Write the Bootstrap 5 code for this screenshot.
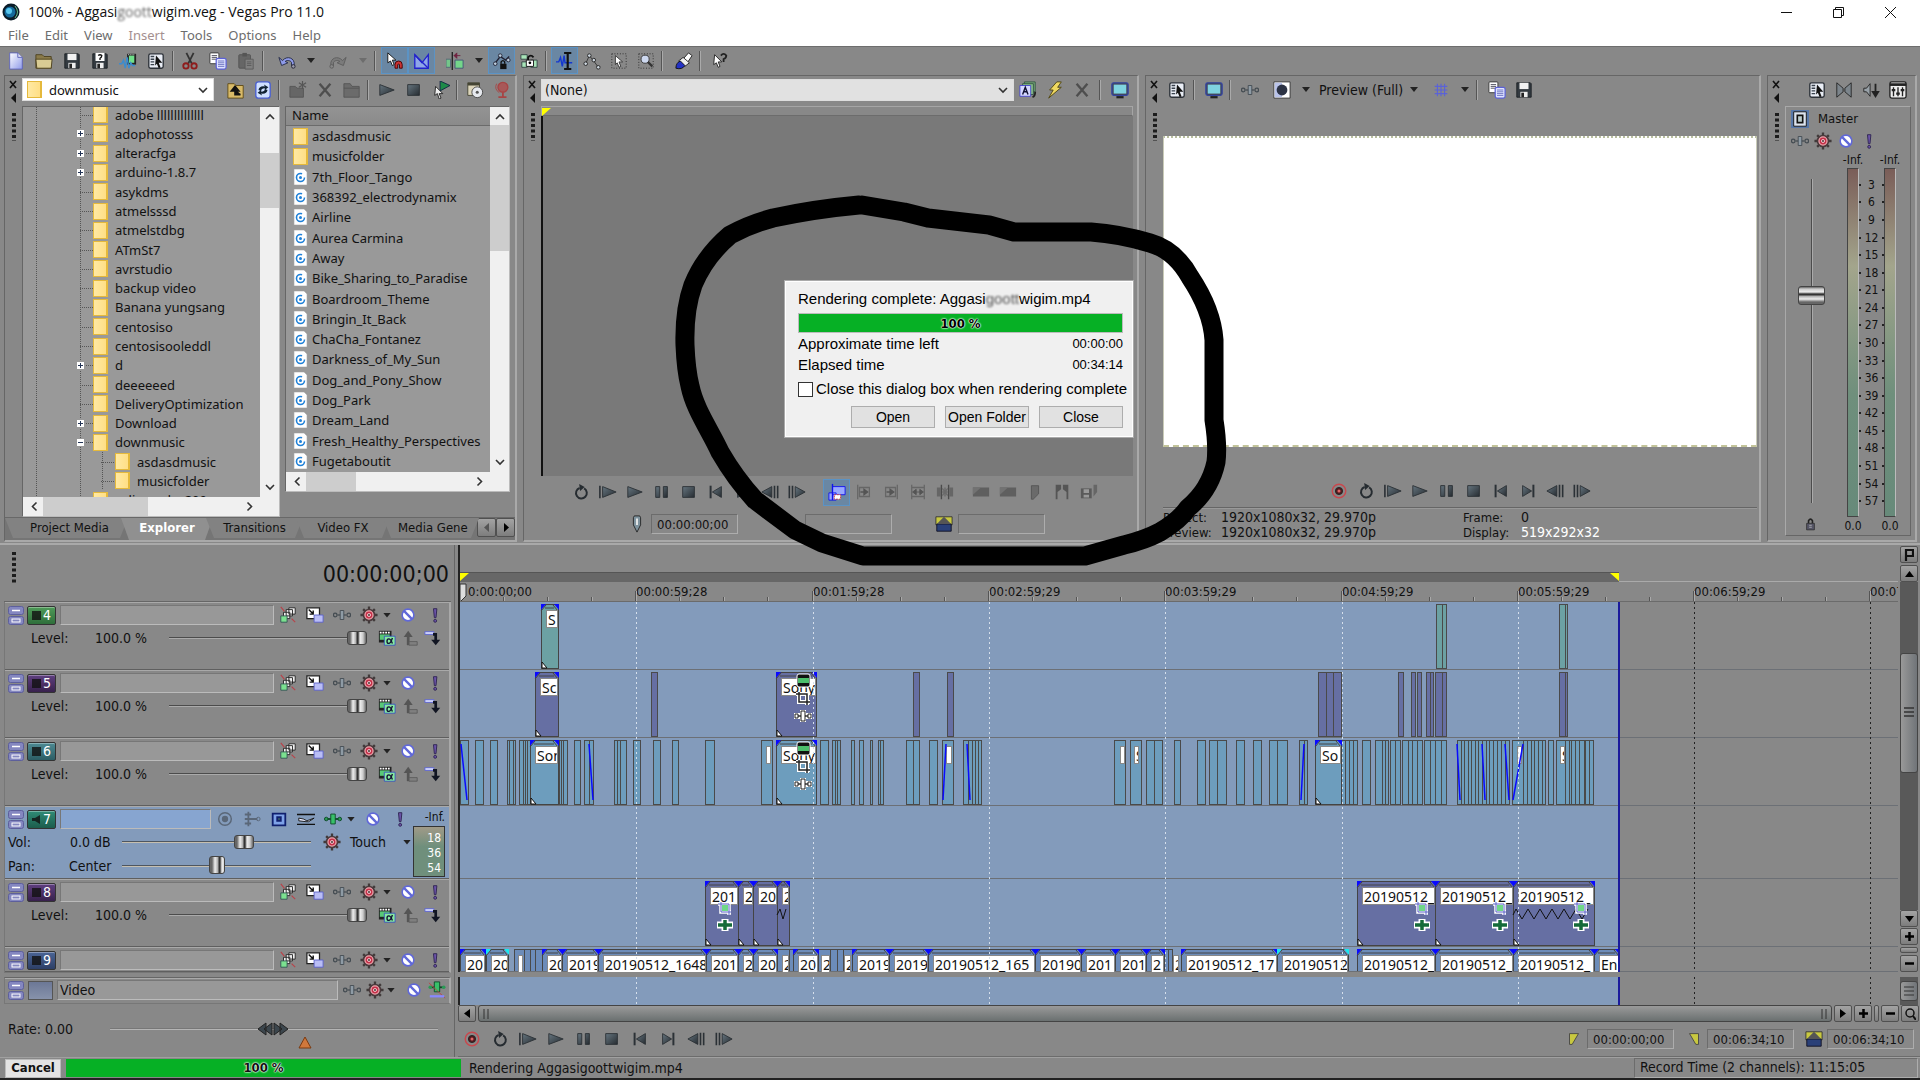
<!DOCTYPE html>
<html lang="en">
<head>
<meta charset="utf-8">
<meta name="viewport" content="width=device-width, initial-scale=1">
<title>Vegas Pro 11.0</title>
<link rel="stylesheet" href="https://cdn.jsdelivr.net/npm/bootstrap@5.3.0/dist/css/bootstrap.min.css">
<style>
:root{--face:#888;--dark:#666;--light:#a9a9a9;--ink:#111;--sel:#839bbb}
body{font-family:"DejaVu Sans Condensed","DejaVu Sans",sans-serif;font-stretch:condensed;font-size:13px;line-height:16px;color:var(--ink);background:var(--face);overflow:hidden}
.ui{font-family:"Noto Sans","Noto Sans CJK KR",sans-serif;font-stretch:normal}
.t14{font-size:14px}
button,input,select{font:inherit;color:inherit}
svg{display:block}
.titlebar{height:24px;background:#fff;padding-left:2px;font-family:"Open Sans","Noto Sans",sans-serif;font-stretch:normal;font-size:14px}
.smudge{filter:blur(1px);opacity:.65}
.winbtn{width:52px;height:24px;border:0;background:none;padding:0}
.menus{height:22px;background:#fff;padding-left:8px;gap:16px}
.menus a{color:#6d6d6d;text-decoration:none}
.menus a.off{color:#a48f8f}
.maintools{height:28px;border-top:1px solid #6d6d6d;padding-left:2px}
.ib{width:28px;height:27px;padding:0;border:0;background:none;display:flex;align-items:center;justify-content:center;flex:none}
.ib.on{background:#6a87a3;border:1px solid #5b93c5}
.ib svg{width:18px;height:18px}
.w27 .ib{width:27px}
.w22 .ib{width:23px}
.vsep{width:6px;height:20px;flex:none;display:flex;justify-content:center}
.vsep::before{content:"";width:2px;background:#555;border-right:1px solid #aaa}
.drop{width:8px;height:5px;flex:none;background:#222;clip-path:polygon(0 0,100% 0,50% 100%);margin:0 1px}
.drop.off{background:#6d6d6d}
.dock{flex:1 1 469px;min-height:0;padding:1px 3px 1px 4px;gap:6px}
.panel{border:1px solid var(--dark);border-right:2px solid var(--light);border-bottom:2px solid var(--light);min-width:0;position:relative}
.grip{width:17px;flex:none;padding:3px 0 0 3px}
.ptools{height:30px;padding-bottom:3px}
.combo{position:relative}
.combo select{appearance:none;width:100%;border:1px solid #ddd;background:#fff;height:23px;padding:0 20px 0 26px;border-radius:0;display:block}
.combo.grey select{background:#e1e1e1;padding-left:3px;height:22px;font-size:14px}
.combo svg{position:absolute;pointer-events:none}
.listbox{background:#999;border:1px solid #bbb;border-top-color:#666;border-left-color:#666;min-height:0}
.listbox ul{list-style:none;margin:0;padding:0;display:flex;flex-direction:column}
.listbox li{flex:1 1 0;display:flex;align-items:center;white-space:nowrap;min-height:0}
.tree ul{height:405px;margin-top:-2px;position:relative}
.tree li{padding-left:46px;position:relative}
.tree li.kid{padding-left:68px}
.tree li::before{content:"";position:absolute;left:57px;width:13px;top:50%;border-top:1px dotted #555}
.tree li.kid::before{left:78px}
.tree li span{position:relative}
.tree .fold{margin-left:24px;margin-right:7px}
.twig{position:absolute;width:9px;height:9px;left:53px;background:#fff;border:1px solid #999;z-index:1}
.twig::before{content:"";position:absolute;left:1px;top:3px;width:5px;height:1px;background:#235}
.twig.plus::after{content:"";position:absolute;left:3px;top:1px;width:1px;height:5px;background:#235}
.vline{position:absolute;top:0;bottom:0;border-left:1px dotted #555}
.fold{width:15px;height:17px;flex:none;background:linear-gradient(90deg,#ffe9a3,#ffdf86);border:1px solid #e5b93c;border-right-width:2px;display:inline-block}
.sb{background:#f0f0f0;flex:none;display:flex;align-items:center}
.sb.v{width:19px;flex-direction:column;justify-content:space-between;padding:6px 0}
.sb.h{height:19px;justify-content:space-between;padding:0 6px}
.sb{position:relative}
.sb i{position:absolute;background:#cdcdcd}
.heading{height:19px;border-bottom:1px solid #6b6b6b;background:linear-gradient(#939393,#8a8a8a);padding-left:6px}
.files ul{height:345px}
.files li{padding-left:7px;gap:4px}
.tabs{height:23px;background:#757575;border-top:1px solid #686868}
.tabs a{color:#111;text-decoration:none;height:20px;line-height:20px;background:#828282;clip-path:polygon(0 0,100% 0,calc(100% - 8px) 100%,8px 100%);text-align:center;white-space:nowrap;overflow:hidden;flex:none;margin-right:-7px}
.tabs a.cur{background:#909090;color:#fff;font-weight:700;height:22px}
.sqb{border:1px solid #505050;background:linear-gradient(#a3a3a3,#7d7d7d);padding:0;border-radius:2px;display:flex;align-items:center;justify-content:center;flex:none}
.strip{height:10px;border:1px solid #a5a5a5;border-bottom-color:#6c6c6c;position:relative}
.tri{position:absolute;width:9px;height:8px;background:#ff0;clip-path:polygon(0 0,100% 0,0 100%)}
.tri.r{clip-path:polygon(0 0,100% 0,100% 100%)}
.viewer{background:#797979;border-left:2px solid #111}
.field{border:1px solid #6c6c6c;border-right-color:#adadad;border-bottom-color:#adadad;background:none;height:20px;padding:0 5px;border-radius:0}
.movie{background:#fff;height:311px;border:1px solid #c9cbb8;border-top:2px dotted #b9bfa0;border-bottom:2px dashed #c3c49a}
.info{border-top:1px solid #666;box-shadow:inset 0 1px #999;padding-top:2px;display:grid;grid-template-columns:58px 242px 58px 1fr;line-height:15px}
.masterbox{border:1px solid var(--light);border-right-color:var(--dark);border-bottom-color:var(--dark)}
.meters{display:grid;grid-template-columns:61px 12px 25px 12px 1fr;grid-template-rows:17px 1fr 18px}
.meters>span{display:flex;justify-content:center;white-space:nowrap;align-items:center;font-size:12px}
.bar{border:1px solid #444;border-right-color:#bbb;background:linear-gradient(#7a5d58 0,#a3a58c 28%,#6f8f7c 65%,#678a7a)}
.ticks{display:flex;flex-direction:column;padding:8px 0 7px}
.ticks span{flex:1;display:flex;align-items:center;justify-content:space-between;font-size:12px}
.ticks span::before,.ticks span::after{content:"";width:2px;height:2px;background:#222}
input[type=range]{appearance:none;-webkit-appearance:none;background:none;height:18px;margin:0;padding:0;min-width:0}
input[type=range]::-webkit-slider-runnable-track{height:2px;background:#4c4c4c;border-bottom:1px solid #aaa}
input[type=range]::-webkit-slider-thumb{-webkit-appearance:none;width:20px;height:14px;margin-top:-6px;border:1px solid #444;border-radius:3px;background:linear-gradient(90deg,#666 0 2px,#eee 5px,#aaa 8px,#333 9px 10px,#eee 12px,#ccc 15px,#666)}
input.pan::-webkit-slider-thumb{width:16px;height:18px;margin-top:-9px}
input.blue::-webkit-slider-runnable-track{background:#4e5660;border-color:#c5bfb0}
.faderbox{position:relative;grid-row:1/4}
.faderbox input{position:absolute;width:324px;left:-136px;top:181px;transform:rotate(-90deg)}
.faderbox input::-webkit-slider-thumb{height:27px;width:19px;margin-top:-13px}
.faderbox svg{position:absolute;left:18px;bottom:4px}
.session{border-top:2px solid var(--light);flex:none}
.leftcol{width:455px;flex:none;padding-left:4px;border-right:1px solid #666}
.clock{height:57px;font-size:23px;line-height:59px;text-align:right;padding-right:2px;border-bottom:1px solid #666;margin-right:3px;position:relative}
.clock svg{position:absolute;left:4px;top:7px}
.tracks{border:1px solid #777;border-top:0;border-right:2px solid var(--light);margin-right:3px}
.trk{height:68px;border-top:1px solid var(--light);border-bottom:1px solid #5f5f5f;padding:2px 1px 0 3px;font-size:14px;overflow:hidden}
.trk.audio{height:73px;background:var(--sel)}
.trk.cut{height:25px}
.trk .ib{height:20px}
.num{width:29px;height:19px;flex:none;border:1px solid #333;border-radius:2px;color:#fff;padding:0 4px;box-shadow:inset 0 1px #ffffff55;display:flex;align-items:center;justify-content:space-between;font-size:14px;font-family:"DejaVu Sans",sans-serif}
.nm{flex:1;min-width:0;height:20px;background:#989898;border:1px solid #777;border-right-color:#bbb;border-bottom-color:#bbb;padding:0 2px;border-radius:0}
.audio .nm{background:#87a5d0}
.vu{width:35px;flex:none;padding-right:3px;line-height:17px;font-size:12px;text-align:right;white-space:nowrap}
.vu>div{border:1px solid #333;height:51px;background:linear-gradient(#a09a88,#6f8f7c 40%);line-height:15px;padding:4px 3px 0 0;overflow:hidden;color:#fff}
.lane-area{flex:1;min-width:0;border-left:2px solid #222;position:relative}
.loopbar{height:10px;margin-top:27px;border-bottom:1px solid #aaa;position:relative}
.loopbar>div{width:1159px;height:10px;background:#676767;position:relative;border-top:1px solid #555}
.ruler{height:20px;position:relative;overflow:hidden;border-bottom:1px solid #6b6b6b}
.ruler span{position:absolute;top:3px;line-height:14px}
.ruler i{position:absolute;bottom:0;width:2px;height:4px;background:#555;border-right:1px solid #aaa}
.ruler i.big{height:10px}
.lanes{background:linear-gradient(90deg,var(--sel) 0 1159px,#888 0);position:relative;overflow:hidden}
.lane{height:68px;border-bottom:1px solid #6c7076;position:relative}
.lane svg{position:absolute;left:0;top:0;width:100%;height:100%}
.lane span{position:absolute;top:8px;height:18px;background:#fff;border:1px solid #888;overflow:hidden;white-space:nowrap;line-height:17px;padding-left:1px;font-size:14px}
.gl{position:absolute;top:0;bottom:0;width:1px;background:repeating-linear-gradient(#d5dfeb 0 2px,transparent 2px 5px)}
.gl.k{background:repeating-linear-gradient(#222 0 2px,transparent 2px 5px)}
.endline{position:absolute;top:0;bottom:0;width:2px;background:#1a1a9c;left:1158px}
.rail{width:22px;flex:none;padding:0 1px 0 2px}
.rail .sqb{width:18px;height:17px}
.groove{background:#595959;width:18px;position:relative}
.knob{background:linear-gradient(90deg,#999,#707478);border:1px solid #444;border-radius:3px;display:flex;align-items:center;justify-content:center}
.hbar{height:17px;border:1px solid #444;background:linear-gradient(#9a9a9a,#6a7070);border-radius:3px;padding:0 4px}
.transport{height:35px;border-bottom:1px solid #6c6c6c}
.status{height:23px;border-top:1px solid #a0a0a0;border-bottom:2px solid #222;font-size:14px}
.cancel{width:56px;height:19px;border:1px solid #bbb;background:#e3e3e3;font-weight:700;padding:0;line-height:16px;font-size:13px;border-radius:0}
.prog{background:#06b025;text-align:center;font-weight:700;font-family:"DejaVu Sans",sans-serif;font-size:13px;text-shadow:0 0 2px #fff,0 0 2px #fff,0 0 1px #fff}
.dlg{position:absolute;left:785px;top:281px;width:348px;background:#f0f0f0;border:1px solid #fff;outline:1px solid #aaa;padding:8px 9px 8px 12px;font-family:"Liberation Sans",Arial,sans-serif;font-size:15px;line-height:18px;color:#000}
.dlg .prog{height:20px;border:1px solid #bcbcbc;line-height:19px}
.dlg button{width:84px;height:22px;border:1px solid #adadad;background:#e1e1e1;padding:0;line-height:18px;font-size:14px}
.dlg input{width:15px;height:15px;flex:none;appearance:none;border:1px solid #333;background:#fff;margin:0}
.dlg .tm{font-size:13px}
.scribble{position:absolute;left:0;top:0;pointer-events:none}
</style>
<script src="https://cdn.jsdelivr.net/npm/bootstrap@5.3.0/dist/js/bootstrap.bundle.min.js"></script>
</head>
<body class="min-vh-100 d-flex flex-column position-relative">
<svg width="0" height="0" class="position-absolute" aria-hidden="true">
<defs>
<linearGradient id="gm" x1="0" y1="0" x2="1" y2="1"><stop offset="0" stop-color="#66757f"/><stop offset="1" stop-color="#262c31"/></linearGradient>
<linearGradient id="gp" x1="0" y1="0" x2="1" y2="1"><stop offset="0" stop-color="#fff"/><stop offset="1" stop-color="#8f9bea"/></linearGradient>
</defs>
<symbol id="new" viewBox="0 0 20 20"><path d="M3 1h9l5 5v13H3z" fill="url(#gp)" stroke="#5b62b8"/><path d="M12 1v5h5" fill="#dde" stroke="#5b62b8"/></symbol>
<symbol id="open" viewBox="0 0 20 20"><path d="M1 3h7l2 2h8v13H1z" fill="#8a7a4a" stroke="#4c411f"/><path d="M1 8h18l-1 10H2z" fill="#d9cc94" stroke="#4c411f"/></symbol>
<symbol id="save" viewBox="0 0 20 20"><path d="M2 2h15l1 1v15H2z" fill="#333a40" stroke="#1c2024"/><path d="M5 2h10v7H5z" fill="#f2f2f2"/><path d="M6 12h8v6H6z" fill="#eee"/><path d="M7 13h3v5H7z" fill="#222"/></symbol>
<symbol id="saveas" viewBox="0 0 20 20"><path d="M2 2h15l1 1v15H2z" fill="#333a40" stroke="#1c2024"/><path d="M5 1h10v9H5z" fill="#fff"/><path d="M8 4q2-2 4 0 0 2-2 3v2" stroke="#111" fill="none" stroke-width="1.5"/><path d="M6 12h8v6H6z" fill="#eee"/><path d="M7 13h3v5H7z" fill="#222"/></symbol>
<symbol id="render" viewBox="0 0 20 20"><path d="M9 2h10v12H9z" fill="#222"/><path d="M11 4h6v8h-6z" fill="#6fe08a"/><path d="M10 3h8" stroke="#ddd" stroke-dasharray="1 1"/><path d="M0 13h3l2-4 2 9 2-12 2 12 2-6 2 3 3 0" fill="none" stroke="#3a8cd0" stroke-width="1.6"/></symbol>
<symbol id="props" viewBox="0 0 20 20"><rect x="2" y="2" width="16" height="16" rx="2" fill="#e9edf5" stroke="#2c3138" stroke-width="1.5"/><path d="M4 5h4M4 8h4M4 11h4M4 14h4" stroke="#39424d" stroke-width="1.6"/><path d="M10 4l7 8h-4l2 5-2 1-2-5-2 2z" fill="#111"/></symbol>
<symbol id="cut" viewBox="0 0 20 20"><path d="M6 1l6 12M14 1L8 13" stroke="#333" stroke-width="2" fill="none"/><circle cx="5.500" cy="15.500" r="3" fill="none" stroke="#8e1c1c" stroke-width="2"/><circle cx="14.500" cy="15.500" r="3" fill="none" stroke="#8e1c1c" stroke-width="2"/></symbol>
<symbol id="copy" viewBox="0 0 20 20"><rect x="1" y="1" width="10" height="12" rx="1" fill="#fff" stroke="#333"/><path d="M3 4h6M3 6h6M3 8h6" stroke="#445"/><rect x="8" y="7" width="11" height="12" rx="2" fill="#dfe3ff" stroke="#5c62d6" stroke-width="1.400"/><path d="M10 10h7M10 12h7M10 14h7M10 16h7" stroke="#6a70c0"/></symbol>
<symbol id="paste" viewBox="0 0 20 20"><rect x="2" y="3" width="13" height="15" rx="1" fill="#666" stroke="#555"/><path d="M6 1h5v4H6z" fill="#555"/><path d="M9 8h9v11H9z" fill="#808080" stroke="#5a5a5a"/><path d="M11 11h5M11 13h5M11 15h5" stroke="#5a5a5a"/></symbol>
<symbol id="undo" viewBox="0 0 20 20"><path d="M1 6l3 9 7-3-3-1.500c2-2 6-1 7 1v4l3-1c1-8-8-11-13-5z" fill="#8f9bea" stroke="#222844"/><circle cx="17" cy="16" r="2" fill="#99a" stroke="#223"/></symbol>
<symbol id="redo" viewBox="0 0 20 20"><path d="M19 6l-3 9-7-3 3-1.500c-2-2-6-1-7 1v4l-3-1c-1-8 8-11 13-5z" fill="#7b7b7b" stroke="#5c5c5c"/><circle cx="3" cy="16" r="2" fill="#888" stroke="#5c5c5c"/></symbol>
<symbol id="snap" viewBox="0 0 20 20"><path d="M2 1l9 8H7l2 5-2 1-2-5-3 2z" fill="#fff" stroke="#111"/><path d="M10 18v-4a4 4 0 0 1 8 0v4h-3v-4q-1-1-2 0v4z" fill="#c33" stroke="#400"/></symbol>
<symbol id="xfade" viewBox="0 0 20 20"><path d="M2 3v15h15V3L10 12z" fill="#8fa6e8" stroke="#22c" stroke-width="1.500"/><path d="M2 3l15 15" stroke="#22c" stroke-width="1.500"/></symbol>
<symbol id="ripple" viewBox="0 0 20 20"><path d="M0 8h5v9H0z" fill="#74c68a" stroke="#567"/><path d="M7 0v20" stroke="#222" stroke-width="1.500"/><path d="M9 4h7M9 4l3-3v6z" stroke="#702040" fill="#702040"/><path d="M10 9h9v9h-9z" fill="#74d68a" stroke="#457"/></symbol>
<symbol id="lockenv" viewBox="0 0 20 20"><path d="M2 13L8 5l6 4 4-4" stroke="#223" fill="none" stroke-width="1.500"/><g fill="#bcd" stroke="#223"><circle cx="2.500" cy="13" r="2"/><circle cx="8" cy="4" r="2"/><circle cx="17" cy="9" r="2"/></g><path d="M8 13h7v6H8z" fill="#111"/><path d="M9 13v-2q2-3 4 0v2" stroke="#111" fill="none" stroke-width="1.500"/></symbol>
<symbol id="group" viewBox="0 0 20 20"><path d="M1 3h7v5H1zM12 9h7v8h-7zM2 11h6v6H2z" fill="#a8e4b8" stroke="#344"/><path d="M7 9h8v7H7z" fill="#fff" stroke="#111"/><path d="M9 9V6q3-4 6 0" stroke="#111" fill="none" stroke-width="2"/><circle cx="11" cy="12" r="1.500"/></symbol>
<symbol id="edit" viewBox="0 0 20 20"><path d="M0 11h3l2-5 2 10 2-12 1 8h8" fill="none" stroke="#1438d0" stroke-width="1.600"/><path d="M9 1h8M9 19h8M13 1v18" stroke="#111" stroke-width="2.400"/></symbol>
<symbol id="env" viewBox="0 0 20 20"><path d="M3 13L7 4l5 6 5 7" stroke="#333" fill="none"/><g fill="#cdd6df" stroke="#222"><circle cx="3" cy="13" r="2"/><circle cx="7" cy="4" r="2"/><circle cx="12" cy="9" r="2"/><circle cx="17" cy="17" r="2"/></g></symbol>
<symbol id="select" viewBox="0 0 20 20"><rect x="2" y="2" width="16" height="16" fill="none" stroke="#222" stroke-dasharray="1 2"/><path d="M6 4l8 7h-4l2 5-2 1-2-5-2 2z" fill="#fff" stroke="#333"/></symbol>
<symbol id="zoomt" viewBox="0 0 20 20"><rect x="2" y="2" width="16" height="16" fill="none" stroke="#222" stroke-dasharray="1 2"/><circle cx="9" cy="8" r="4.500" fill="#cdd8ef" stroke="#333"/><path d="M12 11l5 5" stroke="#333" stroke-width="2.500"/></symbol>
<symbol id="brush" viewBox="0 0 20 20"><path d="M8 9l7-8 4 3-6 9z" fill="#fff" stroke="#222"/><path d="M4 10l5-4 7 6-5 4z" fill="#eee" stroke="#222"/><path d="M1 18q0-6 5-8l5 5q-3 5-10 3z" fill="#2331c4" stroke="#111"/></symbol>
<symbol id="help" viewBox="0 0 20 20"><path d="M4 3l8 8H8l2 5-2 1-2-5-3 2z" fill="#fff" stroke="#222"/><path d="M11 4q3-4 6 0 0 3-3 4v3" stroke="#222" fill="none" stroke-width="2"/></symbol>
<symbol id="up" viewBox="0 0 20 20"><path d="M1 3h7l2 2h8v14H1z" fill="#d8ba68" stroke="#5e4a15"/><path d="M15 15H9V8M9 6l-4 5h8z" stroke="#111" fill="#111" stroke-width="2"/></symbol>
<symbol id="refresh" viewBox="0 0 20 20"><rect x="2" y="1" width="16" height="18" rx="3" fill="#cfe0ff" stroke="#4a5fd0" stroke-width="1.500"/><path d="M5 10q1-5 7-4l-1-2 5 3-4 3v-2q-4 0-4 3zM15 10q-1 5-7 4l1 2-5-3 4-3v2q4 0 4-3z" fill="#123"/></symbol>
<symbol id="newf" viewBox="0 0 20 20"><path d="M1 6h6l2 2h7v10H1z" fill="#666" stroke="#555"/><path d="M15 0v9M11 2l8 5M19 2l-8 5" stroke="#555" stroke-width="1.300"/></symbol>
<symbol id="delx" viewBox="0 0 20 20"><path d="M4 3l12 14M16 3L4 17" stroke="#4e4e4e" stroke-width="2.600"/></symbol>
<symbol id="gfold" viewBox="0 0 20 20"><path d="M1 3h7l2 3h8v12H1z" fill="#6b6b6b" stroke="#555"/><path d="M1 8h17" stroke="#555"/></symbol>
<symbol id="play" viewBox="0 0 20 20"><path d="M2 4l16 6-16 6z" fill="url(#gm)" stroke="#2b3136"/></symbol>
<symbol id="stop" viewBox="0 0 20 20"><path d="M3 4h13v12H3z" fill="url(#gm)" stroke="#2b3136"/></symbol>
<symbol id="pause" viewBox="0 0 20 20"><path d="M3 4h4.500v12H3zM11.500 4H16v12h-4.500z" fill="url(#gm)" stroke="#2b3136"/></symbol>
<symbol id="playst" viewBox="0 0 20 20"><path d="M1 3v14" stroke="#2b3136" stroke-width="1.800"/><path d="M4 4l15 6-15 6z" fill="url(#gm)" stroke="#2b3136"/></symbol>
<symbol id="prev" viewBox="0 0 20 20"><path d="M4 3v14" stroke="#2b3136" stroke-width="2.200"/><path d="M16 4v12l-10-6z" fill="url(#gm)" stroke="#2b3136"/></symbol>
<symbol id="next" viewBox="0 0 20 20"><path d="M16 3v14" stroke="#2b3136" stroke-width="2.200"/><path d="M4 4v12l10-6z" fill="url(#gm)" stroke="#2b3136"/></symbol>
<symbol id="sback" viewBox="0 0 20 20"><path d="M15 3v14M18.500 3v14" stroke="#2b3136" stroke-width="1.800"/><path d="M12 4v12L1 10z" fill="url(#gm)" stroke="#2b3136"/></symbol>
<symbol id="sfwd" viewBox="0 0 20 20"><path d="M5 3v14M1.500 3v14" stroke="#2b3136" stroke-width="1.800"/><path d="M8 4v12l11-6z" fill="url(#gm)" stroke="#2b3136"/></symbol>
<symbol id="loop" viewBox="0 0 20 20"><path d="M13.500 6a6 6 0 1 1-5-0.500" stroke="#262c31" stroke-width="2.200" fill="none"/><path d="M8 1l6 3.500-5 4.500z" fill="#262c31"/></symbol>
<symbol id="rec" viewBox="0 0 20 20"><circle cx="10" cy="10" r="7.500" fill="none" stroke="#c8484e" stroke-width="1.600"/><circle cx="10" cy="10" r="4" fill="#541a1e" stroke="#222"/><circle cx="10" cy="10" r="1.700" fill="#d66"/></symbol>
<symbol id="autop" viewBox="0 0 20 20"><path d="M9 0l11 5-11 6z" fill="#1d8a48" stroke="#124"/><path d="M4 6l8 8H8l2 5-2 1-2-6-3 2z" fill="#eee" stroke="#222"/></symbol>
<symbol id="disc" viewBox="0 0 20 20"><path d="M2 2h13v14H2z" fill="#ddd6bb" stroke="#443"/><path d="M2 2h13v3H2z" fill="#443"/><circle cx="12.500" cy="12.500" r="6" fill="#e6e9ee" stroke="#444"/><circle cx="12.500" cy="12.500" r="1.700" fill="#555"/></symbol>
<symbol id="globe" viewBox="0 0 20 20"><circle cx="11" cy="7" r="5.500" fill="#a85858" stroke="#a84444" stroke-width="1.500"/><path d="M11 13v4M6 18h9" stroke="#a84444" stroke-width="2"/><path d="M4 3q-3 6 3 10" stroke="#a84444" fill="none"/></symbol>
<symbol id="fxa" viewBox="0 0 20 20"><path d="M6 1h12v11H6z" fill="#7a7" stroke="#354"/><path d="M4 3h12v12H4z" fill="#8b8" stroke="#354"/><path d="M1 5h12v12H1z" fill="#d5d8ff" stroke="#44c"/><path d="M4 15l3-8 3 8M5 12h4" stroke="#113" fill="none" stroke-width="1.600"/><path d="M18 12q0 5-3 6" stroke="#222" fill="none" stroke-width="2"/></symbol>
<symbol id="bolt" viewBox="0 0 20 20"><path d="M12 1h5l-4 6h4L3 19l5-9H4z" fill="#f0d860" stroke="#4d4412"/></symbol>
<symbol id="mon" viewBox="0 0 20 20"><rect x="1" y="2" width="18" height="14" rx="2" fill="#445" stroke="#3344a0" stroke-width="1.500"/><path d="M3 4h14v10H3z" fill="#7fd3e0"/><path d="M6 18h8" stroke="#222" stroke-width="2.500"/></symbol>
<symbol id="plug" viewBox="0 0 20 20"><circle cx="2.500" cy="10" r="2" fill="none" stroke="#444c52" stroke-width="1.400"/><circle cx="17.500" cy="10" r="2" fill="none" stroke="#444c52" stroke-width="1.400"/><path d="M5 10h10" stroke="#444c52" stroke-width="1.400"/><path d="M8 5h4v10H8z" fill="#8e9ba5" stroke="#444c52"/></symbol>
<symbol id="plugg" viewBox="0 0 20 20"><path d="M3 10h14" stroke="#0d4a28" stroke-width="2"/><circle cx="2.500" cy="10" r="2" fill="#2b9a55" stroke="#0d4a28"/><circle cx="17.500" cy="10" r="2" fill="#2b9a55" stroke="#0d4a28"/><path d="M7.500 4.500h5v11h-5z" fill="#38c069" stroke="#0d4a28"/></symbol>
<symbol id="split" viewBox="0 0 20 20"><path d="M1 1h18v18H1z" fill="#fff" stroke="#333"/><path d="M2 2h8v16H2z" fill="#b9c3ea"/><circle cx="10" cy="10" r="6" fill="#2c3345"/></symbol>
<symbol id="grid" viewBox="0 0 20 20"><path d="M6 3v14M10 3v14M14 3v14M3 6h14M3 10h14M3 14h14" stroke="#5a62d8" stroke-width="1.200"/></symbol>
<symbol id="down" viewBox="0 0 20 20"><path d="M2 8h3l4-5v14l-4-5H2z" fill="#98a1a8" stroke="#222"/><path d="M15 3v10M15 17l-3-5h6z" stroke="#222" fill="#222" stroke-width="2"/></symbol>
<symbol id="bow" viewBox="0 0 20 20"><path d="M2 2l7 6v4l-7 6zM18 2l-7 6v4l7 6z" fill="#7c858c" stroke="#222"/></symbol>
<symbol id="mix" viewBox="0 0 20 20"><rect x="1" y="1" width="18" height="18" rx="2" fill="#eee" stroke="#222" stroke-width="1.500"/><path d="M1 4h18" stroke="#222" stroke-width="3"/><path d="M5 7v10M10 7v10M15 7v10" stroke="#222" stroke-width="1.500"/><path d="M3 10h4M8 14h4M13 10h4" stroke="#222" stroke-width="2.500"/></symbol>
<symbol id="gear" viewBox="0 0 20 20"><path d="M10 0.500v19M0.500 10h19M3.500 3.500l13 13M16.500 3.500l-13 13" stroke="#403a3a" stroke-width="2.600"/><circle cx="10" cy="10" r="7" fill="#4a3a3c"/><circle cx="10" cy="10" r="4.500" fill="#c43048" stroke="#f0a5ad" stroke-width="1.400"/><circle cx="10" cy="10" r="2" fill="#fff"/><circle cx="10" cy="10" r="1" fill="#311"/></symbol>
<symbol id="mute" viewBox="0 0 20 20"><circle cx="10" cy="10" r="6.500" fill="#fff" stroke="#6068d8" stroke-width="1.800"/><path d="M5.500 5.500l9 9" stroke="#6068d8" stroke-width="2.600"/></symbol>
<symbol id="solo" viewBox="0 0 20 20"><path d="M8.300 3h3.800l-1 10h-1.800z" fill="#6b53a8" stroke="#2d2350"/><circle cx="10.200" cy="16.500" r="1.600" fill="#6b53a8" stroke="#2d2350"/></symbol>
<symbol id="mblur" viewBox="0 0 20 20"><path d="M11 2h7v7h-7zM8 4h7v7H8zM5 7h7v7H5z" fill="#eee" stroke="#222"/><path d="M2 11h7v7H2z" fill="#7be08f" stroke="#355"/><path d="M2 1l4 5M14 14l4 4" stroke="#b8434a" stroke-width="1.300"/></symbol>
<symbol id="tmot" viewBox="0 0 20 20"><path d="M1 2h14v12H1z" fill="#fff" stroke="#222" stroke-width="1.400"/><path d="M3 4l5 5M8 5v4H4" stroke="#111" stroke-width="1.600" fill="none"/><path d="M9 10h10v8H9z" fill="#b9bdf5" stroke="#5a60c8"/></symbol>
<symbol id="comp" viewBox="0 0 20 20"><path d="M1 2h14v13H1z" fill="#222"/><path d="M2 4h12" stroke="#fff" stroke-width="2" stroke-dasharray="2 1"/><path d="M2 6h11v6H2z" fill="#58c878"/><path d="M7 8h12v10H7z" fill="#86eca0" stroke="#3a50c0"/><path d="M16 10q-2 6-4 6-2 0-2-2.500t2-2.500 4 5" stroke="#113" fill="none" stroke-width="1.500"/></symbol>
<symbol id="parent" viewBox="0 0 20 20"><path d="M8 18V7" stroke="#555" stroke-width="3"/><path d="M8 2l5 7H3z" fill="#555"/><path d="M9 14h9v4H9z" fill="#7f7f7f" stroke="#5c5c5c"/></symbol>
<symbol id="child" viewBox="0 0 20 20"><path d="M1 3h10v3H1z" fill="#d8dcff" stroke="#5a62d0"/><path d="M10 6h3v7" stroke="#111522" stroke-width="3" fill="none"/><path d="M13 18l5-6H8z" fill="#111522"/></symbol>
<symbol id="arm" viewBox="0 0 20 20"><circle cx="10" cy="10" r="7" fill="none" stroke="#5a6778" stroke-width="1.600"/><circle cx="10" cy="10" r="3.500" fill="#5a6778"/></symbol>
<symbol id="inp" viewBox="0 0 20 20"><path d="M2 5h7M2 10h14M2 15h7M6 2v16" stroke="#5a6778" stroke-width="2"/><circle cx="17" cy="10" r="2" fill="none" stroke="#5a6778"/></symbol>
<symbol id="bus" viewBox="0 0 20 20"><path d="M3 4h14v13H3z" fill="#7ea2e8" stroke="#10206e" stroke-width="2"/><path d="M8 8h4v4H8z" fill="#356" stroke="#10206e" stroke-width="2"/></symbol>
<symbol id="phase" viewBox="0 0 20 20"><path d="M0 5h20M0 16h20" stroke="#111" stroke-width="1.500"/><path d="M2 9l5 1 4 2 8-3-6 4h-3L2 12z" fill="#eef" stroke="#111"/></symbol>
<symbol id="mbus" viewBox="0 0 20 20"><rect width="20" height="20" fill="#5878a8"/><path d="M3 2h14v16H3z" fill="#dde4ee" stroke="#111"/><path d="M7 6h6v8H7z" fill="#bcc" stroke="#111" stroke-width="1.800"/></symbol>
<symbol id="lock" viewBox="0 0 20 20"><path d="M4 9h12v10H4z" fill="#556" stroke="#222"/><path d="M7 9V5q3-5 6 0v4" stroke="#222" stroke-width="2.500" fill="none"/><path d="M8 12h4M8 15h4" stroke="#ccc"/></symbol>
<symbol id="sync" viewBox="0 0 20 20"><path d="M5 4h14v9H5zM1 11h8v8H1z" fill="#98a8ff" stroke="#11e"/><path d="M5 1v18" stroke="#11e" stroke-width="1.500"/><path d="M7 13h7v5H7z" fill="#fff" stroke="#c33" stroke-dasharray="2 1"/></symbol>
<symbol id="ga" viewBox="0 0 20 20"><path d="M3 2v16M5 5h11v10H5z" fill="none" stroke="#666" stroke-width="1.400"/><path d="M6 10h6M10 7l4 3-4 3z" stroke="#555" fill="#555" stroke-width="1.500"/></symbol>
<symbol id="gb" viewBox="0 0 20 20"><path d="M17 2v16M4 5h11v10H4z" fill="none" stroke="#666" stroke-width="1.400"/><path d="M5 10h6M9 7l4 3-4 3z" stroke="#555" fill="#555" stroke-width="1.500"/></symbol>
<symbol id="gc" viewBox="0 0 20 20"><path d="M3 2v16M17 2v16M3 5h14M3 15h14" fill="none" stroke="#666" stroke-width="1.400"/><path d="M7 10h6M8 7l-4 3 4 3zM12 7l4 3-4 3z" stroke="#555" fill="#555"/></symbol>
<symbol id="gd" viewBox="0 0 20 20"><path d="M1 5h4v10H1zM15 5h4v10h-4z" fill="#666"/><path d="M6 2v16M14 2v16" stroke="#4a4a4a" stroke-width="1.500"/><path d="M7 6l6 8M13 6l-6 8M10 5v10M7 10h6" stroke="#6a6a6a" stroke-width="1.500"/></symbol>
<symbol id="ge" viewBox="0 0 20 20"><path d="M1 5h18v10H1z" fill="#5f5f5f"/><path d="M1 5h9L1 13z" fill="#727272"/></symbol>
<symbol id="gf" viewBox="0 0 20 20"><path d="M6 3h8v9l-6 6H6z" fill="#6a6a6a" stroke="#555"/></symbol>
<symbol id="gg" viewBox="0 0 20 20"><path d="M3 2h6v5l-4 3v8H3zM17 2h-6v5l4 3v8h2z" fill="#555"/></symbol>
<symbol id="gh" viewBox="0 0 20 20"><path d="M1 6h12v11H1z" fill="#5a5a5a"/><path d="M4 7h6v4H4zM4 13h6v3H4z" fill="#999"/><path d="M15 2h4v8l-4 5z" fill="#666"/></symbol>
<symbol id="pin" viewBox="0 0 20 20"><path d="M7 1h6l1 2v8l-4 8-4-8V3z" fill="#7e929d" stroke="#222"/><path d="M9 4h2v7H9z" fill="#eee"/></symbol>
<symbol id="span" viewBox="0 0 20 20"><path d="M1 2h18v9H1z" fill="#c8c840" stroke="#333"/><path d="M2 10h16v8H2z" fill="#2a4078" stroke="#112"/><path d="M10 2l8 8H2z" fill="#555"/></symbol>
<symbol id="mks" viewBox="0 0 20 20"><path d="M5 4h10L8 16H5z" fill="#c8c840" stroke="#444"/></symbol>
<symbol id="mke" viewBox="0 0 20 20"><path d="M15 4H5l7 12h3z" fill="#c8c840" stroke="#444"/></symbol>
<symbol id="auto" viewBox="0 0 20 20"><path d="M2 7h16" stroke="#0d4a28" stroke-width="2"/><path d="M7 1h6v11H7z" fill="#38c069" stroke="#0d4a28"/><circle cx="2.500" cy="7" r="2" fill="#2b9a55"/><circle cx="17.500" cy="7" r="2" fill="#2b9a55"/><path d="M1 2l18 17" stroke="#b44"/><path d="M2 17h16" stroke="#88f" stroke-width="2.500"/></symbol>
<symbol id="docm" viewBox="0 0 13 16"><path d="M0 0h10l3 3v13H0z" fill="#fff" stroke="#aaa" stroke-width=".6"/><circle cx="6.500" cy="8.500" r="4" fill="none" stroke="#1e80d8" stroke-width="1.600" stroke-dasharray="20 5"/><circle cx="6.500" cy="8.500" r="1.500" fill="#1e80d8"/></symbol>
<symbol id="mini" viewBox="0 0 16 19"><rect x=".5" y=".5" width="15" height="8" rx="2" fill="#8487c0" stroke="#5d5f9c"/><path d="M4 4.500h8" stroke="#fff" stroke-width="1.500"/><rect x=".5" y="10.500" width="15" height="8" rx="2" fill="#8487c0" stroke="#5d5f9c"/><rect x="4" y="13" width="8" height="3" fill="none" stroke="#fff"/></symbol>
<symbol id="cv" viewBox="0 0 10 7"><path d="M1 1l4 4 4-4" fill="none" stroke="#333" stroke-width="1.600"/></symbol>
<symbol id="gripd" viewBox="0 0 12 62"><path d="M2 2l6 7M8 2l-6 7" stroke="#111" stroke-width="1.600"/><path d="M8 14v10l-5-5z" fill="#111"/><path d="M6 34v28" stroke="#1c1c1c" stroke-width="4" stroke-dasharray="3 2.500"/></symbol>
</svg>

<header>
<div class="titlebar d-flex align-items-center">
<svg width="18" height="18" viewBox="0 0 18 18" class="me-2"><circle cx="9" cy="9" r="8.500" fill="#0b1c28"/><circle cx="8" cy="9" r="5.500" fill="#146a9c"/><circle cx="7" cy="8" r="3" fill="#58c7ee"/><path d="M13 3q5 6 0 12" stroke="#6b8" fill="none"/></svg>
<span>100% - Aggasi<span class="smudge">goott</span>wigim.veg - Vegas Pro 11.0</span>
<div class="ms-auto d-flex pe-1">
<button class="winbtn" aria-label="Minimize"><svg class="mx-auto" width="11" height="11"><path d="M0 5.500h11" stroke="#111"/></svg></button>
<button class="winbtn" aria-label="Restore"><svg class="mx-auto" width="11" height="11"><path d="M.5 2.500h8v8h-8zM2.500 2.500v-2h8v8h-2" fill="none" stroke="#111"/></svg></button>
<button class="winbtn" aria-label="Close"><svg class="mx-auto" width="11" height="11"><path d="M0 0l11 11M11 0L0 11" stroke="#111"/></svg></button>
</div></div>
<nav class="menus ui d-flex align-items-center"><a href="#">File</a><a href="#">Edit</a><a href="#">View</a><a href="#" class="off">Insert</a><a href="#">Tools</a><a href="#">Options</a><a href="#">Help</a></nav>
</header>

<div class="maintools d-flex align-items-center"><div class="d-flex align-items-center" data-bar="new open save saveas render props | cut copy paste | _7 undo _5 v _8 redo _6 w _4 | _3"></div><div class="d-flex align-items-center w27" data-bar="snap* xfade* _6 ripple _6 v _4 lockenv* group _1 | _2 edit* env select zoomt | _5 brush | _3 help"></div></div>

<main class="dock d-flex">
<section class="panel d-flex flex-column" style="flex:0 0 513px">
 <div class="d-flex flex-grow-1" style="min-height:0">
 <div class="grip"><svg width="12" height="62"><use href="#gripd"/></svg></div>
 <div class="flex-grow-1 d-flex flex-column" style="min-width:0">
  <div class="ptools w27 d-flex align-items-center">
   <div class="combo" style="width:197px"><select class="ui" aria-label="Folder"><option>downmusic</option></select><span class="fold position-absolute" style="left:5px;top:3px"></span><svg width="10" height="7" style="right:6px;top:9px"><use href="#cv"/></svg></div>
   <div class="d-flex align-items-center" data-bar="_8 up refresh | _2 newf delx gfold | _2 play stop autop | _1 disc globe"></div>
  </div>
  <div class="d-flex ui" style="gap:5px">
   <div class="listbox tree d-flex flex-column" style="width:258px;height:411px">
    <div class="d-flex flex-grow-1 overflow-hidden"><div class="flex-grow-1 overflow-hidden position-relative"><ul id="tree"></ul></div>
    <div class="sb v"><svg width="10" height="7" transform="rotate(180)"><use href="#cv"/></svg><i style="inset:46px 0 auto 0;height:55px"></i><svg width="10" height="7"><use href="#cv"/></svg></div></div>
    <div class="sb h"><svg width="10" height="7" transform="rotate(90)"><use href="#cv"/></svg><i style="left:20px;top:0;width:105px;height:19px"></i><svg width="10" height="7" transform="rotate(-90)" style="margin-right:18px"><use href="#cv"/></svg></div>
   </div>
   <div class="listbox files d-flex flex-column align-self-start" style="width:225px;height:386px">
    <div class="d-flex flex-grow-1 overflow-hidden"><div class="flex-grow-1 overflow-hidden"><div class="heading">Name</div><ul id="files"></ul></div>
    <div class="sb v"><svg width="10" height="7" transform="rotate(180)"><use href="#cv"/></svg><i style="inset:18px 0 auto 0;height:126px"></i><svg width="10" height="7"><use href="#cv"/></svg></div></div>
    <div class="sb h"><svg width="10" height="7" transform="rotate(90)"><use href="#cv"/></svg><i style="left:20px;top:0;width:50px;height:19px"></i><svg width="10" height="7" transform="rotate(-90)" style="margin-right:18px"><use href="#cv"/></svg></div>
   </div>
  </div>
 </div></div>
 <nav class="tabs d-flex overflow-hidden"><a href="#" style="width:123px;padding-left:6px">Project Media</a><a href="#" class="cur" style="width:92px">Explorer</a><a href="#" style="width:97px">Transitions</a><a href="#" style="width:94px">Video FX</a><a href="#" style="width:96px;padding-left:15px;text-align:left">Media Gene</a>
 <button class="sqb ms-auto" style="width:19px;height:19px" aria-label="Scroll left"><svg width="8" height="9"><path d="M6 0v9L1 4.500z" fill="#555"/></svg></button><button class="sqb" style="width:19px;height:19px" aria-label="Scroll right"><svg width="8" height="9"><path d="M2 0v9l5-4.500z" fill="#000"/></svg></button></nav>
</section>

<section class="panel d-flex" style="flex:1 1 0">
 <div class="grip"><svg width="12" height="62"><use href="#gripd"/></svg></div>
 <div class="flex-grow-1 d-flex flex-column" style="min-width:0;padding-right:4px">
  <div class="ptools w27 d-flex align-items-center">
   <div class="combo grey flex-grow-1"><select aria-label="Trimmer media"><option>(None)</option></select><svg width="10" height="7" style="right:6px;top:8px"><use href="#cv"/></svg></div>
   <div class="d-flex align-items-center" data-bar="fxa bolt delx _2 | _3 mon"></div>
  </div>
  <div class="strip"><span class="tri" style="left:0;top:1px"></span></div>
  <div class="viewer flex-grow-1"></div>
  <div class="w27 d-flex align-items-center" style="height:32px;padding-left:26px" data-bar="loop playst play pause stop prev next sback sfwd _13 sync* ga gb gc gd _9 ge ge gf gg gh"></div>
  <div class="d-flex align-items-center" style="height:32px;padding:0 88px 0 82px"><div class="d-flex" data-bar="pin"></div><input class="field" style="width:87px" value="00:00:00;00" aria-label="Cursor position"><input class="field" style="width:87px;margin-left:67px" aria-label="Selection start"><div class="d-flex ms-auto" data-bar="span"></div><input class="field" style="width:87px" aria-label="Selection length"></div>
 </div>
</section>

<section class="panel d-flex" style="flex:1 1 0">
 <div class="grip"><svg width="12" height="62"><use href="#gripd"/></svg></div>
 <div class="flex-grow-1 d-flex flex-column" style="min-width:0;padding-right:2px">
  <div class="ptools w27 d-flex align-items-center"><div class="d-flex align-items-center" data-bar="props _1 | _3 mon | _3 plug _5 split _6 v"></div><span class="t14 ps-2" style="width:95px;white-space:nowrap">Preview (Full)</span><div class="d-flex align-items-center" data-bar="_3 v _8 grid _6 v _4 | _3 copy save"></div></div>
  <div class="movie" style="margin-top:30px"></div>
  <div class="w27 d-flex justify-content-center align-items-center mt-auto" style="height:32px" data-bar="rec loop playst play pause stop prev next sback sfwd"></div>
  <div class="info"><span>Project:</span><span class="t14">1920x1080x32, 29.970p</span><span>Frame:</span><span class="t14">0</span><span>Preview:</span><span class="t14">1920x1080x32, 29.970p</span><span>Display:</span><span class="t14 text-white">519x292x32</span></div>
 </div>
</section>

<section class="panel d-flex" style="flex:0 0 150px">
 <div class="grip"><svg width="12" height="62"><use href="#gripd"/></svg></div>
 <div class="flex-grow-1 d-flex flex-column pe-1 pb-1">
  <div class="ptools w27 d-flex align-items-center justify-content-end" data-bar="props bow down mix"></div>
  <div class="masterbox flex-grow-1 d-flex flex-column">
   <div class="d-flex align-items-center" style="height:23px;gap:4px"><span data-bar="mbus"></span>Master</div>
   <div class="d-flex w22 align-items-center" style="height:21px;padding-left:2px" data-bar="plug gear mute solo"></div>
   <div class="meters flex-grow-1">
    <div class="faderbox"><input type="range" aria-label="Master volume" value="65"><svg width="13" height="14"><use href="#lock"/></svg></div>
    <span>-Inf.</span><span></span><span>-Inf.</span><span></span>
    <div class="bar"></div><div class="ticks" id="ticks"></div><div class="bar"></div><span></span>
    <span>0.0</span><span></span><span>0.0</span><span></span>
   </div>
  </div>
 </div>
</section>
</main>

<section class="session d-flex">
 <div class="leftcol d-flex flex-column">
  <div class="clock"><svg width="12" height="31"><path d="M6 0v31" stroke="#1c1c1c" stroke-width="4" stroke-dasharray="3 2.500"/></svg>00:00:00;00</div>
  <div class="tracks" id="tracks"></div>
  <div class="tracks" style="margin-top:4px;border-top:1px solid #666"><div class="trk" style="height:25px;border-bottom:0;padding-top:1px"><div class="d-flex align-items-center">
   <svg width="16" height="19" class="flex-shrink-0"><use href="#mini"/></svg><span class="flex-shrink-0" style="width:25px;height:19px;margin:0 4px;background:linear-gradient(#6c7896,#8792ab);border:1px solid #555"></span><input class="nm" value="Video" aria-label="Bus track name"><div class="d-flex align-items-center w22" data-bar="_2 plug gear v _6 mute auto"></div></div></div></div>
  <div class="d-flex align-items-center position-relative t14" style="height:50px;padding-left:4px">
   <label for="rate" style="width:102px">Rate: 0.00</label><svg width="328" height="40" viewBox="0 0 328 40" aria-hidden="true"><path d="M0 20.500h328" stroke="#b5b5b5"/><path d="M0 19.500h328" stroke="#777"/><path d="M156 14v12l-8-6zM162 14v12l-8-6zM164 14v12l8-6zM170 14v12l8-6z" fill="#3c464d" stroke="#222"/><path d="M195 28l6 11h-12z" fill="#d0783c" stroke="#7a3a10"/></svg>
   <input id="rate" type="range" class="position-absolute opacity-0" style="left:106px;width:328px">
  </div>
 </div>

 <div class="flex-grow-1 d-flex flex-column" style="min-width:0;padding-left:3px">
  <div class="d-flex">
   <div class="lane-area">
    <div class="loopbar"><div><span class="tri" style="left:0;top:0"></span><span class="tri r" style="right:0;top:0"></span></div></div>
    <div class="ruler" id="ruler"></div>
    <div class="lanes" id="lanes"></div>
   </div>
   <div class="rail d-flex flex-column">
    <button class="sqb" style="margin-top:1px" aria-label="Markers"><svg width="10" height="12"><path d="M2 12V1h7v6H3" fill="none" stroke="#111" stroke-width="2.200"/></svg></button>
    <button class="sqb" style="margin-top:2px" aria-label="Scroll up"><svg width="9" height="6"><path d="M0 6h9L4.500 0z"/></svg></button>
    <div class="groove flex-grow-1"><div class="knob position-absolute" style="top:71px;width:18px;height:120px"><svg width="10" height="12"><path d="M0 1h10M0 5h10M0 9h10" stroke="#333" stroke-width="1.500"/></svg></div></div>
    <button class="sqb" aria-label="Scroll down"><svg width="9" height="6"><path d="M0 0h9L4.500 6z"/></svg></button>
    <button class="sqb" style="margin-top:1px" aria-label="Taller tracks"><svg width="9" height="9"><path d="M0 4.500h9M4.500 0v9" stroke="#000" stroke-width="2.500"/></svg></button>
    <div class="sqb" style="width:18px;height:6px;margin:2px 0"></div>
    <button class="sqb" aria-label="Shorter tracks"><svg width="9" height="9"><path d="M0 4.500h9" stroke="#000" stroke-width="2.500"/></svg></button>
   </div>
  </div>
  <div class="d-flex" style="margin-top:5px;height:28px"><div class="lane-area"><div class="lanes h-100" id="buslane"></div></div><div class="rail"><div class="groove h-100 pt-1"><div class="knob" style="width:18px;height:20px"><svg width="10" height="10"><path d="M0 1h10M0 5h10M0 9h10" stroke="#333"/></svg></div></div></div></div>
  <div class="d-flex" style="gap:2px;padding-right:1px">
   <button class="sqb" style="width:18px;height:17px" aria-label="Scroll back"><svg width="6" height="9"><path d="M6 0v9L0 4.500z"/></svg></button>
   <div class="hbar flex-grow-1 d-flex justify-content-between align-items-center"><svg width="6" height="10"><path d="M1 0v10M5 0v10" stroke="#333"/></svg><svg width="6" height="10"><path d="M1 0v10M5 0v10" stroke="#333"/></svg></div>
   <button class="sqb" style="width:18px;height:17px" aria-label="Scroll forward"><svg width="6" height="9"><path d="M0 0v9l6-4.500z"/></svg></button>
   <button class="sqb" style="width:18px;height:17px" aria-label="Zoom in"><svg width="9" height="9"><path d="M0 4.500h9M4.500 0v9" stroke="#000" stroke-width="2.500"/></svg></button>
   <div class="sqb" style="width:5px;height:17px"></div>
   <button class="sqb" style="width:18px;height:17px" aria-label="Zoom out"><svg width="9" height="9"><path d="M0 4.500h9" stroke="#000" stroke-width="2.500"/></svg></button>
   <button class="sqb" style="width:18px;height:17px" aria-label="Zoom tool"><svg width="11" height="12"><circle cx="5" cy="5" r="4" fill="none" stroke="#111" stroke-width="1.500"/><path d="M8 8l3 4" stroke="#111" stroke-width="2"/></svg></button>
  </div>
  <div class="transport d-flex align-items-center"><div class="d-flex" data-bar="rec loop playst play pause stop prev next sback sfwd"></div>
   <div class="ms-auto d-flex align-items-center w27" style="padding-right:6px"><span data-bar="mks"></span><input class="field" style="width:87px" value="00:00:00;00" aria-label="Loop start"><span data-bar="mke" style="margin-left:6px"></span><input class="field" style="width:87px" value="00:06:34;10" aria-label="Loop end"><span data-bar="span" style="margin-left:6px"></span><input class="field" style="width:87px" value="00:06:34;10" aria-label="Loop length"></div></div>
 </div>
</section>
<footer class="status d-flex align-items-center" style="padding:0 2px 0 5px">
 <button class="cancel">Cancel</button><div class="prog" style="width:395px;height:18px;margin-left:5px;line-height:18px">100 %</div><span class="ms-2">Rendering Aggasigoottwigim.mp4</span>
 <span class="ms-auto field" style="width:284px">Record Time (2 channels): 11:15:05</span>
</footer>

<div class="dlg" role="dialog" aria-label="Render progress">
 <div>Rendering complete: Aggasi<span class="smudge">goott</span>wigim.mp4</div>
 <div class="prog" style="margin:5px 0 0">100 %</div>
 <div class="d-flex justify-content-between" style="margin-top:2px"><span>Approximate time left</span><span class="tm">00:00:00</span></div>
 <div class="d-flex justify-content-between" style="margin-top:3px"><span>Elapsed time</span><span class="tm">00:34:14</span></div>
 <div class="d-flex align-items-center" style="margin-top:6px;gap:3px"><input type="checkbox" id="cl"><label for="cl" class="text-nowrap">Close this dialog box when rendering complete</label></div>
 <div class="d-flex justify-content-end" style="margin-top:8px;gap:10px"><button>Open</button><button>Open Folder</button><button>Close</button></div>
</div>
<svg class="scribble" width="1300" height="600" aria-hidden="true"><path d="M859 205Q815 209 773 218Q750 224 730 235C710 252 700 268 693 285Q684 310 685 345Q686 370 690 386C695 410 710 430 720 452Q735 478 755 500L795 530L822 543L863 556H1085L1124 545Q1145 540 1160 532Q1180 520 1188 508Q1210 490 1216 462Q1218 445 1214 420Q1214 380 1214 340Q1212 310 1190 277Q1175 250 1150 243Q1120 234 1091 232H1014L989 225L928 218L904 212L862 205" fill="none" stroke="#000" stroke-width="19" stroke-linejoin="round" stroke-linecap="round"/></svg>

<script>
const names={new:'New',open:'Open',save:'Save'};
// Toolbars: "name" is a button, "name*" a pressed one, "|" a rule, "v"/"w" an arrow, "_n" a gap of n pixels
const button=n=>{const on=n.endsWith('*');n=n.replace('*','');return `<button class="ib${on?' on':''}" aria-label="${names[n]||n}"><svg><use href="#${n}"/></svg></button>`};
const bar=s=>s.split(' ').map(t=>t=='|'?'<span class="vsep"></span>':t=='v'?'<span class="drop"></span>':t=='w'?'<span class="drop off"></span>':t[0]=='_'?`<span style="width:${t.slice(1)}px;flex:none"></span>`:button(t)).join('');

tree.innerHTML='<span class="vline" style="left:13px"></span><span class="vline" style="left:57px"></span><span class="vline" style="left:79px;top:347px;height:37px;bottom:auto"></span>'+
['adobe llllllllllllll','+adophotosss','+alteracfga','+arduino-1.8.7','asykdms','atmelsssd','atmelstdbg','ATmSt7','avrstudio','backup video','Banana yungsang','centosiso','centosisooleddl','+d','deeeeeed','DeliveryOptimization','+Download','-downmusic','>asdasdmusic','>musicfolder','+eclipsecdec200'].map(t=>{
 const k=t[0],kid=k=='>',tw=k=='+'?'plus':k=='-'?'minus':'';
 return `<li class="${kid?'kid':''}">${tw?`<i class="twig ${tw}"></i>`:''}<span class="fold"></span><span>${kid||tw?t.slice(1):t}</span></li>`}).join('');
files.innerHTML=['asdasdmusic','musicfolder','7th_Floor_Tango','368392_electrodynamix','Airline','Aurea Carmina','Away','Bike_Sharing_to_Paradise','Boardroom_Theme','Bringin_It_Back','ChaCha_Fontanez','Darkness_of_My_Sun','Dog_and_Pony_Show','Dog_Park','Dream_Land','Fresh_Healthy_Perspectives','Fugetaboutit'].map((t,i)=>
 `<li>${i<2?'<span class="fold"></span>':'<svg width="15" height="16"><use href="#docm"/></svg>'}<span>${t}</span></li>`).join('');
ticks.innerHTML=Array.from({length:19},(_,i)=>`<span>${3+3*i}</span>`).join('');

const head=(n,c,name)=>`<svg width="16" height="19" class="flex-shrink-0"><use href="#mini"/></svg><span class="num" style="background:${c};margin:0 4px 0 3px"><svg width="9" height="9"><path d="${name?'M0 3h3l5-3v9l-5-3H0z':'M0 0h9v9H0z'}" fill="#111" opacity=".8"/></svg>${n}</span><input class="nm" aria-label="Track ${n} name">`;
const vid=(n,c,cut)=>`<div class="trk${cut?' cut':''}"><div class="d-flex align-items-center w27">${head(n,c)}${bar('mblur tmot plug gear v _2 mute solo')}</div>`+
 (cut?'':`<div class="d-flex align-items-center w22" style="padding:3px 4px 0 23px;"><label for="lv${n}" style="width:64px">Level:</label><span style="width:74px">100.0 %</span><input id="lv${n}" type="range" value="100" class="flex-grow-1"><span style="width:8px"></span>${bar('comp parent child')}</div>`)+'</div>';
tracks.innerHTML=vid(4,'linear-gradient(#4e9a58,#2f6f3b)')+vid(5,'linear-gradient(#5f3f80,#38214d)')+vid(6,'linear-gradient(#4d8a93,#2c5d64)')+
`<div class="trk audio d-flex"><div class="flex-grow-1" style="min-width:0"><div class="d-flex align-items-center w27">${head(7,'linear-gradient(#2f8c76,#1c5c4c)',1)}${bar('arm inp bus phase plugg v _3 mute solo')}</div>
<div class="d-flex align-items-center" style="height:26px"><label for="vol" style="width:62px">Vol:</label><span style="width:52px">0.0 dB</span><input id="vol" class="blue" type="range" value="66" style="width:189px"><span style="width:7px"></span>${button('gear')}<span class="ps-1" style="width:53px">Touch</span><span class="drop ms-1"></span></div>
<div class="d-flex align-items-center" style="height:21px"><label for="pan" style="width:61px">Pan:</label><span style="width:53px">Center</span><input id="pan" class="blue pan" type="range" value="50" style="width:189px"></div></div>
<div class="vu">-Inf.<div>18<br>36<br>54</div></div></div>`+
 vid(8,'linear-gradient(#5f3f80,#38214d)')+vid(9,'linear-gradient(#4b6596,#2d3f66)',1);
document.querySelectorAll('[data-bar]').forEach(e=>e.innerHTML=bar(e.dataset.bar));

// Ruler: one labelled mark a minute, three small ticks between
const step=176.3,stamps=['0:00:00;00','00:00:59;28','00:01:59;28','00:02:59;29','00:03:59;29','00:04:59;29','00:05:59;29','00:06:59;29','00:07:59;29'];
let r='<svg class="position-absolute" width="8" height="20"><path d="M0 2h6v12l-6 6z" fill="#ddd" stroke="#333"/></svg>';
stamps.forEach((s,i)=>{const x=Math.round(i*step);r+=`<span style="left:${i?x:8}px">${s}</span>`;for(let k=0;k<4;k++)if(i+k)r+=`<i class="${k?'':'big'}" style="left:${x-1+k*44}px"></i>`});
ruler.innerHTML=r;

const blue='#6d9dbd',violet='#666fa3',teal='#6ca1a3',steel='#6c8cb9';
const data=[
{f:teal,s:[[976,982,986],[1099,1105,1107]],c:[[81,98,'S']]},
{f:violet,s:[[191,197],[453,459],[487,493],[858,866,873,881],[938,943],[951,955],[957,961],[966,970,973],[975,982,986],[1099,1105,1107]],c:[[75,98,'Sc'],[316,356,'Sony','w']]},
{f:blue,s:[[0,8],[15,23],[30,37],[47,49,53,55],[59,63,65,67,70],[99,101,103,107],[114,120],[124,129,133],[154,157,160,166],[173,180],[193,200],[212,218],[245,254],[301,312],[360,368],[372,375,377,380],[391,394],[399,403],[410,412],[418,420,423],[446,453,459],[469,477],[482,493],[503,508,512,515,518,521],[654,665],[670,681],[686,694,702],[714,720],[737,745],[749,757,766],[776,784],[793,801],[809,817,827],[839,844,847],[881,885,889,893,897],[902,910],[915,922,925,928],[930,935,940],[942,948,952,957,962],[964,970,975,981,986],[997,1001,1004,1008,1011,1015,1018,1022,1026,1029,1033,1037,1041,1045,1049],[1052,1063,1067,1071,1074,1078,1082,1085],[1088,1093],[1096,1105,1109,1111,1115,1119,1124],[1125,1129,1133]],
 c:[[70,98,'Son'],[316,356,'Sony','w'],[855,881,'So']],l:[[306,5,''],[486,6,''],[660,5,''],[674,5,'S'],[1057,5,''],[1100,5,'S']],
 b:[[1,7],[129,133],[486,483],[507,510],[844,841],[997,1000],[1022,1025],[1045,1049],[1063,1053]]},
{h:73},
{f:violet,c:[[245,278,'201','g'],[278,293,'2'],[293,317,'20'],[317,329,'2','z'],[897,975,'20190512_','g'],[975,1053,'20190512_','g'],[1053,1134,'20190512_','gz']]},
{f:steel,h:25,s:[[54,64,70,75,82],[317,329,333],[358,370,377],[377,383,392],[704,708,712]],c:[[0,25,'20'],[26,48,'20','c'],[82,102,'20'],[102,138,'2019'],[138,246,'20190512_1648'],[246,278,'201'],[278,293,'2'],[293,317,'20'],[333,358,'20'],[392,429,'2019'],[429,468,'2019'],[468,575,'20190512_165'],[575,621,'20190'],[621,655,'201'],[655,686,'201'],[686,704,'2'],[721,817,'20190512_17'],[817,888,'20190512','c'],[897,975,'20190512_'],[975,1053,'20190512_'],[1053,1134,'20190512_'],[1134,1159,'En']],l:[[58,5,''],[322,7,'2'],[361,9,'2'],[384,7,'2'],[713,6,'2']]}];
lanes.innerHTML=data.map(d=>{
 let g='',t='';const H=64;
 (d.s||[]).forEach(a=>{const e=a[a.length-1];g+=`<rect x="${a[0]}.5" y="2.5" width="${e-a[0]}" height="${H}" fill="${d.f}" stroke="#4a4a4a"/>`;a.slice(1,-1).forEach(x=>g+=`<path d="M${x}.5 2v${H}" stroke="#4a4a4a"/>`)});
 (d.l||[]).forEach(([x,w,s])=>t+=`<span class="ui" style="left:${x}px;width:${w}px">${s}</span>`);
 (d.c||[]).forEach(([a,b,s,k=''])=>{const q=k.includes('c')?'#19e8f0':'#0a0aff';
  g+=`<rect x="${a}.5" y="2.5" width="${b-a}" height="${H}" fill="${d.f}" stroke="#444"/><path d="M${a} 9l5-6M${b} 9l-5-6M${a+4} 6h${Math.max(0,b-a-8)}" stroke="#444" fill="none"/><path d="M${a} 2h5l-5 6zM${b+1} 2h-5l5 6z" fill="${q}"/>`;
  if(!d.h)g+=`<path d="M${a+1} 60v6h5z" fill="#fff" stroke="#111"/>`;
  if(k.includes('z')){let p=`M${a} 36`;for(let x=a+3,u=1;x<b;x+=b-a<20?3:6,u=!u)p+=`L${x} ${u?30:40}`;g+=`<path d="${p}" fill="none" stroke="#111"/>`}
  t+=`<span class="ui" style="left:${a+5}px;width:${b-a-5}px">${s}</span>`;
  const m=a<300?a+20:b-13;
  if(k.includes('g'))t+=`<svg style="left:${m-9}px;top:22px;width:18px;height:38px"><path d="M5 1v10h10M2 3h11v11" stroke="#fff" stroke-width="3.500" fill="none"/><path d="M5 1v10h10M2 3h11v11" stroke="#5a60c8" fill="none"/><path d="M6 4h6v6H6z" fill="#6fd888"/><path d="M1 24h16M9 18v12" stroke="#fff" stroke-width="7"/><path d="M2 24h14M9 19v10" stroke="#156b39" stroke-width="3.500"/></svg>`;
  if(k.includes('w'))t+=`<svg style="left:${b-23}px;top:3px;width:20px;height:52px"><rect x="4" y="1" width="13" height="13" rx="2" fill="#111" stroke="#fff"/><path d="M5 5h11v5H5z" fill="#4cbf6b"/><path d="M6 19v10h11M3 21h11v11" stroke="#fff" stroke-width="4" fill="none"/><path d="M6 19v10h11M3 21h11v11" stroke="#222" fill="none" stroke-width="1.500"/><path d="M1 43h18M10 37v12" stroke="#fff" stroke-width="6"/><path d="M3 43h14" stroke="#333" stroke-width="1.500"/><path d="M2 41h3v4H2zM15 41h3v4h-3zM8 38h4v10H8z" fill="#fff" stroke="#222"/></svg>`;
 });
 (d.b||[]).forEach(([a,b])=>t+=`<svg><path d="M${a} 6L${b} 62" stroke="#0a0aff" stroke-width="1.500"/></svg>`);
 return `<div class="lane" style="height:${d.h||68}px"><svg>${g}</svg>${t}</div>`}).join('');
const lines=stamps.slice(1).map((_,i)=>`<i class="gl${i>5?' k':''}" style="left:${Math.round((i+1)*step)}px"></i>`).join('')+'<i class="endline"></i>';
lanes.insertAdjacentHTML('beforeend',lines);buslane.innerHTML=lines;
</script>
</body>
</html>
